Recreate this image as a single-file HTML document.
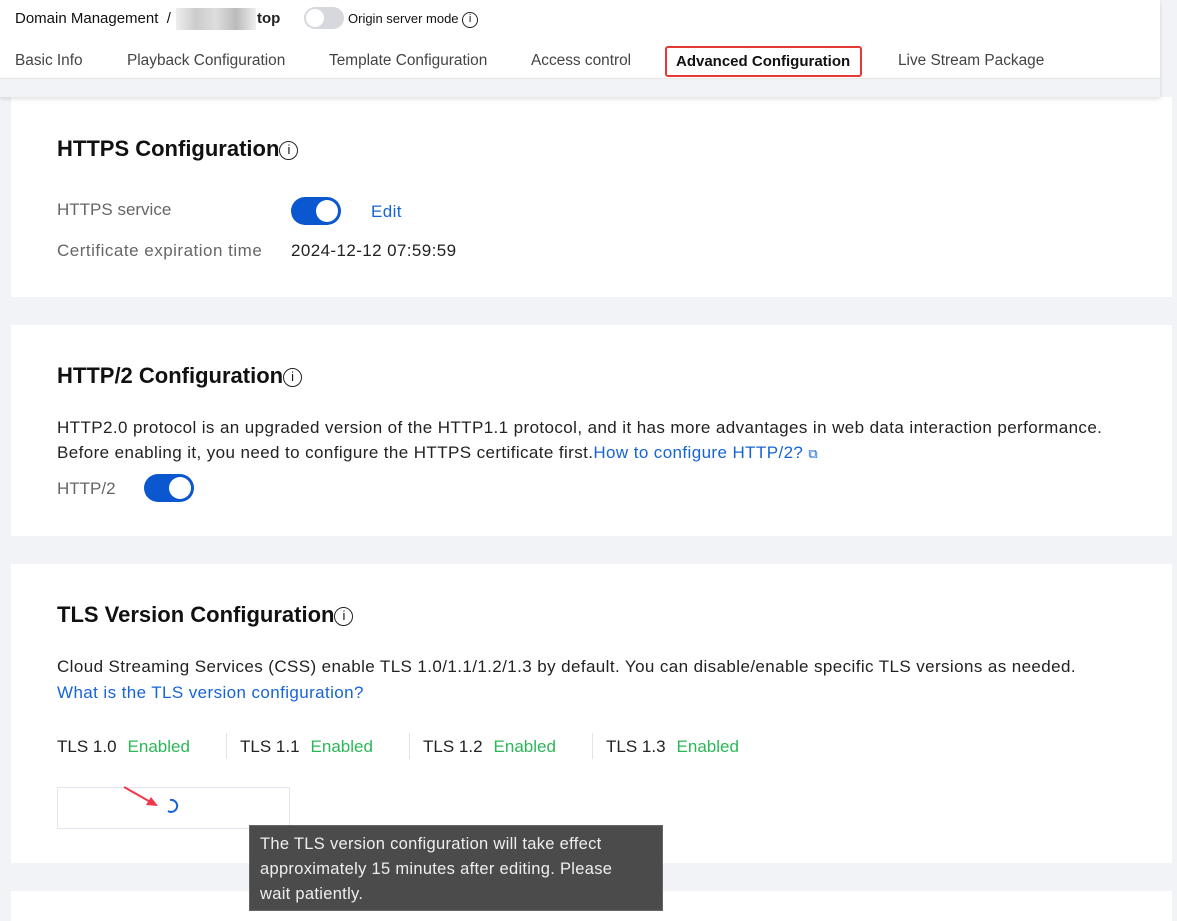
<!DOCTYPE html>
<html><head><style>
*{margin:0;padding:0;box-sizing:border-box}
body{width:1177px;height:914px;overflow:hidden;background:#f2f3f7;font-family:"Liberation Sans",sans-serif;position:relative;color:#222}
.hdr{position:absolute;left:0;top:0;width:1160px;height:97px;background:#fff;box-shadow:0 2px 4px rgba(0,0,0,.12);z-index:2}
.hdr .sub{position:absolute;left:0;top:78px;width:1160px;height:19px;background:#f2f3f7;border-top:1px solid #e5e5e5}
.card{position:absolute;left:11px;width:1161px;background:#fff}
.t{position:absolute;font-size:22px;font-weight:bold;color:#111}
.p{position:absolute;font-size:17px;white-space:nowrap;letter-spacing:.4px}
.g{color:#666}
.a{color:#1664d6}
.sw{position:absolute;width:50px;height:28px;border-radius:14px;background:#0b57d0}
.sw:after{content:"";position:absolute;right:3px;top:3px;width:22px;height:22px;border-radius:50%;background:#fff}
.i{display:inline-block;width:19px;height:19px;border:1.5px solid #222;border-radius:50%;font-size:13px;text-align:center;line-height:16px;font-weight:normal;vertical-align:middle;font-family:"Liberation Sans",sans-serif;letter-spacing:0}
.en{color:#2bb757;margin-left:11px}
.sep{position:absolute;top:733px;width:1px;height:26px;background:#e3e3e3}
.tab{font-size:15.4px !important;color:#444;top:52px;letter-spacing:0}
</style></head><body>
<div class="hdr">
<div class="p" style="left:15px;top:10px;font-size:15px;color:#111;letter-spacing:0">Domain Management&nbsp; /</div>
<div style="position:absolute;left:176px;top:8px;width:80px;height:22px;background:linear-gradient(90deg,#eee,#ccc,#ddd,#bbb,#eee)"></div>
<div class="p" style="left:257px;top:10px;font-size:15px;font-weight:bold;letter-spacing:0">top</div>
<div style="position:absolute;left:304px;top:7px;width:40px;height:22px;border-radius:11px;background:#d6d8de"><div style="position:absolute;left:2px;top:2px;width:18px;height:18px;border-radius:50%;background:#fff"></div></div>
<div class="p" style="left:348px;top:11px;font-size:13px;color:#111;letter-spacing:0">Origin server mode <span class="i" style="width:16px;height:16px;line-height:13px;font-size:11px;border-width:1.3px">i</span></div>
<div class="p tab" style="left:15px">Basic Info</div>
<div class="p tab" style="left:127px">Playback Configuration</div>
<div class="p tab" style="left:329px">Template Configuration</div>
<div class="p tab" style="left:531px">Access control</div>
<div style="position:absolute;left:665px;top:46px;width:197px;height:31px;border:2.5px solid #e53935;border-radius:3px"></div>
<div class="p" style="left:676px;top:53px;font-size:15px;font-weight:bold;color:#111;letter-spacing:0">Advanced Configuration</div>
<div class="p tab" style="left:898px">Live Stream Package</div>
<div class="sub"></div>
</div>
<div class="card" style="top:97px;height:200px"></div>
<div class="t" style="left:57px;top:136px">HTTPS Configuration<span class="i">i</span></div>
<div class="p g" style="left:57px;top:200px;letter-spacing:0">HTTPS service</div>
<div class="sw" style="left:291px;top:197px"></div>
<div class="p a" style="left:371px;top:202px">Edit</div>
<div class="p g" style="left:57px;top:241px;letter-spacing:.5px">Certificate expiration time</div>
<div class="p" style="left:291px;top:241px">2024-12-12 07:59:59</div>

<div class="card" style="top:325px;height:211px"></div>
<div class="t" style="left:57px;top:363px">HTTP/2 Configuration<span class="i">i</span></div>
<div class="p" style="left:57px;top:418px">HTTP2.0 protocol is an upgraded version of the HTTP1.1 protocol, and it has more advantages in web data interaction performance.</div>
<div class="p" style="left:57px;top:443px">Before enabling it, you need to configure the HTTPS certificate first.<span class="a">How to configure HTTP/2? <span style="font-size:13px">⧉</span></span></div>
<div class="p g" style="left:57px;top:479px;letter-spacing:0">HTTP/2</div>
<div class="sw" style="left:144px;top:474px"></div>

<div class="card" style="top:564px;height:299px"></div>
<div class="t" style="left:57px;top:602px">TLS Version Configuration<span class="i">i</span></div>
<div class="p" style="left:57px;top:657px">Cloud Streaming Services (CSS) enable TLS 1.0/1.1/1.2/1.3 by default. You can disable/enable specific TLS versions as needed.</div>
<div class="p a" style="left:57px;top:683px">What is the TLS version configuration?</div>
<div class="p" style="left:57px;top:737px;letter-spacing:0">TLS 1.0<span class="en">Enabled</span></div>
<div class="sep" style="left:226px"></div>
<div class="p" style="left:240px;top:737px;letter-spacing:0">TLS 1.1<span class="en">Enabled</span></div>
<div class="sep" style="left:409px"></div>
<div class="p" style="left:423px;top:737px;letter-spacing:0">TLS 1.2<span class="en">Enabled</span></div>
<div class="sep" style="left:592px"></div>
<div class="p" style="left:606px;top:737px;letter-spacing:0">TLS 1.3<span class="en">Enabled</span></div>
<div style="position:absolute;left:57px;top:787px;width:233px;height:42px;border:1px solid #e2e6ee"></div>
<svg style="position:absolute;left:120px;top:784px" width="70" height="36"><line x1="4" y1="3" x2="34" y2="20" stroke="#f0384c" stroke-width="2"/><polygon points="38,22 26,21 31,13" fill="#f0384c"/><path d="M50 16 A6 6 0 1 1 48 27" fill="none" stroke="#1664d6" stroke-width="2"/></svg>
<div class="card" style="top:891px;height:30px"></div>
<div style="position:absolute;left:249px;top:825px;width:414px;height:86px;background:#4b4b4b;border:1px solid #666;color:#eee;font-size:16.5px;line-height:25px;padding:6px 10px;white-space:nowrap;letter-spacing:.3px">The TLS version configuration will take effect<br>approximately 15 minutes after editing. Please<br>wait patiently.</div>
</body></html>
